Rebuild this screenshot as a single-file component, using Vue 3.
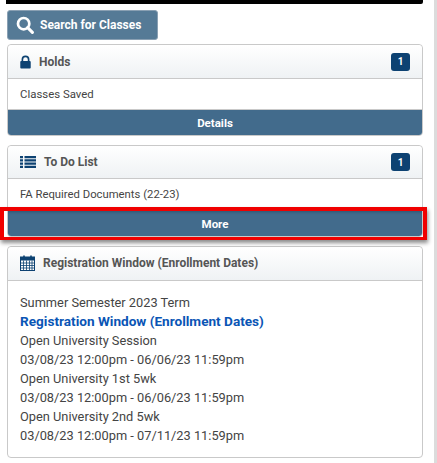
<template>
  <div class="page">
    <div class="topbar"></div>
    <button class="search-btn">
      <svg class="search-icon" viewBox="0 0 20 20" width="18" height="18">
        <circle cx="8.5" cy="8.5" r="6.3" fill="none" stroke="#fff" stroke-width="3" />
        <path d="M13 13l5.2 5.2" stroke="#fff" stroke-width="3.4" stroke-linecap="round" />
      </svg>
      Search for Classes
    </button>

    <section class="card">
      <header class="card-head">
        <svg class="icon" viewBox="0 0 12 14" width="11" height="14">
          <path d="M2.6 7V4.2a3.4 3.4 0 0 1 6.8 0V7" fill="none" stroke="#0d4272" stroke-width="1.8" />
          <rect x="0.3" y="6" width="11.4" height="8" rx="1" fill="#0d4272" />
        </svg>
        <span class="title">Holds</span>
        <span class="badge">1</span>
      </header>
      <div class="card-body">Classes Saved</div>
      <div class="card-foot">Details</div>
    </section>

    <section class="card todo">
      <header class="card-head">
        <svg class="icon" viewBox="0 0 16 12" width="16" height="12">
          <path d="M0 0h3v2.2H0zM4.5 0H16v2.2H4.5zM0 3.3h3v2.2H0zM4.5 3.3H16v2.2H4.5zM0 6.6h3v2.2H0zM4.5 6.6H16v2.2H4.5zM0 9.8h3V12H0zM4.5 9.8H16V12H4.5z" fill="#0d4272" />
        </svg>
        <span class="title">To Do List</span>
        <span class="badge">1</span>
      </header>
      <div class="card-body">FA Required Documents (22-23)</div>
      <div class="card-foot highlighted">More</div>
    </section>

    <section class="card reg">
      <header class="card-head">
        <svg class="icon" viewBox="0 0 15 16" width="15" height="16">
          <rect x="0.5" y="2" width="14" height="13.5" fill="#fff" stroke="#0d4272" />
          <rect x="0.5" y="2" width="14" height="3.5" fill="#0d4272" />
          <path d="M0.5 8h14M0.5 10.5h14M0.5 13h14M3.5 5.5v10M6.5 5.5v10M9.5 5.5v10M12 5.5v10" stroke="#0d4272" stroke-width="0.8" />
          <path d="M4 0.5v3M11 0.5v3" stroke="#0d4272" stroke-width="1.6" />
        </svg>
        <span class="title">Registration Window (Enrollment Dates)</span>
      </header>
      <div class="reg-body">
        <div>Summer Semester 2023 Term</div>
        <a class="reg-link">Registration Window (Enrollment Dates)</a>
        <div v-for="line in lines" :key="line.id">{{ line.text }}</div>
      </div>
    </section>
    <div class="scroll-edge"></div>
  </div>
</template>

<script setup>
const lines = [
  { id: 1, text: 'Open University Session' },
  { id: 2, text: '03/08/23 12:00pm - 06/06/23 11:59pm' },
  { id: 3, text: 'Open University 1st 5wk' },
  { id: 4, text: '03/08/23 12:00pm - 06/06/23 11:59pm' },
  { id: 5, text: 'Open University 2nd 5wk' },
  { id: 6, text: '03/08/23 12:00pm - 07/11/23 11:59pm' }
]
</script>

<style scoped>
.page {
  position: relative;
  width: 437px;
  height: 463px;
  box-sizing: border-box;
  padding: 0 14px 0 7px;
  overflow: hidden;
  background: #fff;
  font-family: Roboto, "Liberation Sans", sans-serif;
  color: #444;
}

.topbar {
  height: 4px;
  margin-left: -1px;
  margin-bottom: 6px;
  background: #000;
  border-bottom-right-radius: 2px;
}

.search-btn {
  display: flex;
  align-items: center;
  gap: 6px;
  width: 151px;
  height: 30px;
  padding: 0 0 0 8px;
  border: 1px solid #8aa0b3;
  border-radius: 3px;
  background: #557a96;
  color: #fff;
  font-family: inherit;
  font-size: 12px;
  font-weight: 700;
}

.card {
  margin-top: 4px;
  border: 1px solid #c9c9c9;
  border-radius: 4px;
  background: #fff;
}

.todo {
  margin-top: 9px;
}

.reg {
  margin-top: 9px;
  height: 212px;
  box-sizing: border-box;
}

.card-head {
  display: flex;
  align-items: center;
  height: 33px;
  padding: 0 12px;
  border-bottom: 1px solid #c9c9c9;
  border-radius: 4px 4px 0 0;
  background: linear-gradient(#fff, #eff2f4);
}

.todo .card-head {
  height: 32px;
}

.reg .card-head {
  height: 31px;
  padding-bottom: 2px;
}

.icon {
  flex: none;
}

.title {
  margin-left: 8px;
  font-size: 12px;
  font-weight: 700;
  color: #555;
}

.badge {
  display: flex;
  align-items: center;
  justify-content: center;
  width: 19px;
  height: 18px;
  margin-left: auto;
  border-radius: 3px;
  background: #0d4272;
  color: #fff;
  font-size: 10px;
  font-weight: 700;
}

.card-body {
  height: 30px;
  padding: 0 12px;
  font-size: 11.4px;
  line-height: 31px;
  color: #444;
}

.todo .card-body {
  height: 31px;
  font-size: 11.3px;
  line-height: 32px;
}

.card-foot {
  height: 25px;
  border-top: 1px solid #c9c9c9;
  border-radius: 0 0 3px 3px;
  background: #426b8c;
  color: #fff;
  font-size: 11.5px;
  font-weight: 700;
  line-height: 26px;
  text-align: center;
}

.highlighted {
  position: relative;
  height: 26px;
  border-top: 0;
  line-height: 28px;
  box-shadow: inset 0 3px 3px -1px #2f5472;
}

.highlighted::after {
  content: "";
  position: absolute;
  inset: -3px -5px -4px -8px;
  border: 4px solid #f00000;
  border-bottom-width: 3px;
  box-shadow: 1px 3px 4px rgba(0, 0, 0, 0.45);
  pointer-events: none;
}

.reg-body {
  padding: 12px 12px 0;
  font-size: 12.8px;
  line-height: 19px;
}

.reg-link {
  display: block;
  color: #0a55b5;
  font-size: 13.6px;
  font-weight: 700;
}

.scroll-edge {
  position: absolute;
  top: 0;
  right: 0;
  width: 3px;
  height: 100%;
  background: #dcdcdc;
}
</style>
